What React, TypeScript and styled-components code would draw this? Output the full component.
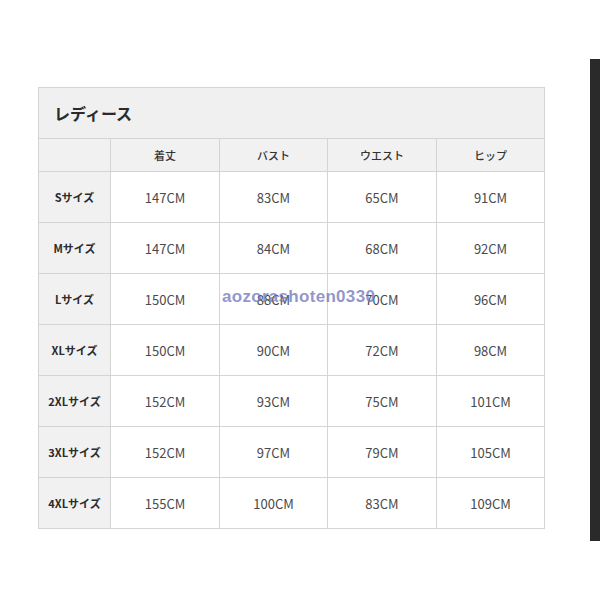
import styled, { createGlobalStyle } from "styled-components";

const GlobalStyle = createGlobalStyle`
  body {
    margin: 0;
    background: #ffffff;
    font-family: "Noto Sans CJK JP", "Noto Sans", sans-serif;
  }
`;

const Page = styled.div`
  display: flex;
  width: 600px;
  height: 600px;
  overflow: hidden;
`;

const Content = styled.main`
  position: relative;
  width: 590px;
  padding: 87px 0 0 38px;
  box-sizing: border-box;
`;

const SideBar = styled.div`
  width: 10px;
  height: 482px;
  margin-top: 59px;
  background: #2a2a2a;
`;

const SizeTable = styled.table`
  border-collapse: collapse;
  width: 506px;
  table-layout: fixed;
  color: #333;
`;

const TitleCell = styled.th`
  height: 50px;
  padding: 0 0 0 15px;
  text-align: left;
  font-size: 16px;
  font-weight: 700;
  background: #f0f0f0;
  border: 1px solid #d4d4d4;
  color: #2b2b2b;
`;

const HeadCell = styled.th`
  height: 32px;
  padding: 0;
  font-size: 11px;
  font-weight: 500;
  background: #f1f1f1;
  border: 1px solid #d4d4d4;
`;

const LabelCell = styled.th`
  height: 50px;
  padding: 0;
  font-size: 11px;
  font-weight: 700;
  background: #f1f1f1;
  border: 1px solid #d4d4d4;
  color: #2b2b2b;
`;

const ValueCell = styled.td`
  padding: 0;
  text-align: center;
  font-size: 13px;
  font-weight: 400;
  color: #4a4a4a;
  border: 1px solid #d4d4d4;
`;

const Watermark = styled.span`
  position: absolute;
  left: 222px;
  top: 287px;
  font-family: "Liberation Sans", Arial, sans-serif;
  font-size: 17px;
  font-weight: 700;
  letter-spacing: 0.3px;
  color: rgba(110, 115, 185, 0.75);
  pointer-events: none;
`;

const columns = ["着丈", "バスト", "ウエスト", "ヒップ"];

const rows: [string, string[]][] = [
  ["Sサイズ", ["147CM", "83CM", "65CM", "91CM"]],
  ["Mサイズ", ["147CM", "84CM", "68CM", "92CM"]],
  ["Lサイズ", ["150CM", "88CM", "70CM", "96CM"]],
  ["XLサイズ", ["150CM", "90CM", "72CM", "98CM"]],
  ["2XLサイズ", ["152CM", "93CM", "75CM", "101CM"]],
  ["3XLサイズ", ["152CM", "97CM", "79CM", "105CM"]],
  ["4XLサイズ", ["155CM", "100CM", "83CM", "109CM"]],
];

const App = () => {
  return (
    <>
      <GlobalStyle />
      <Page>
        <Content>
          <SizeTable>
            <colgroup>
              <col style={{ width: 72 }} />
              <col style={{ width: 109 }} />
              <col style={{ width: 108 }} />
              <col style={{ width: 109 }} />
              <col style={{ width: 108 }} />
            </colgroup>
            <thead>
              <tr>
                <TitleCell colSpan={5}>レディース</TitleCell>
              </tr>
              <tr>
                <HeadCell />
                {columns.map((c) => (
                  <HeadCell key={c}>{c}</HeadCell>
                ))}
              </tr>
            </thead>
            <tbody>
              {rows.map(([label, values]) => (
                <tr key={label}>
                  <LabelCell>{label}</LabelCell>
                  {values.map((v, i) => (
                    <ValueCell key={i}>{v}</ValueCell>
                  ))}
                </tr>
              ))}
            </tbody>
          </SizeTable>
          <Watermark>aozorashoten0330</Watermark>
        </Content>
        <SideBar />
      </Page>
    </>
  );
};

export default App;
